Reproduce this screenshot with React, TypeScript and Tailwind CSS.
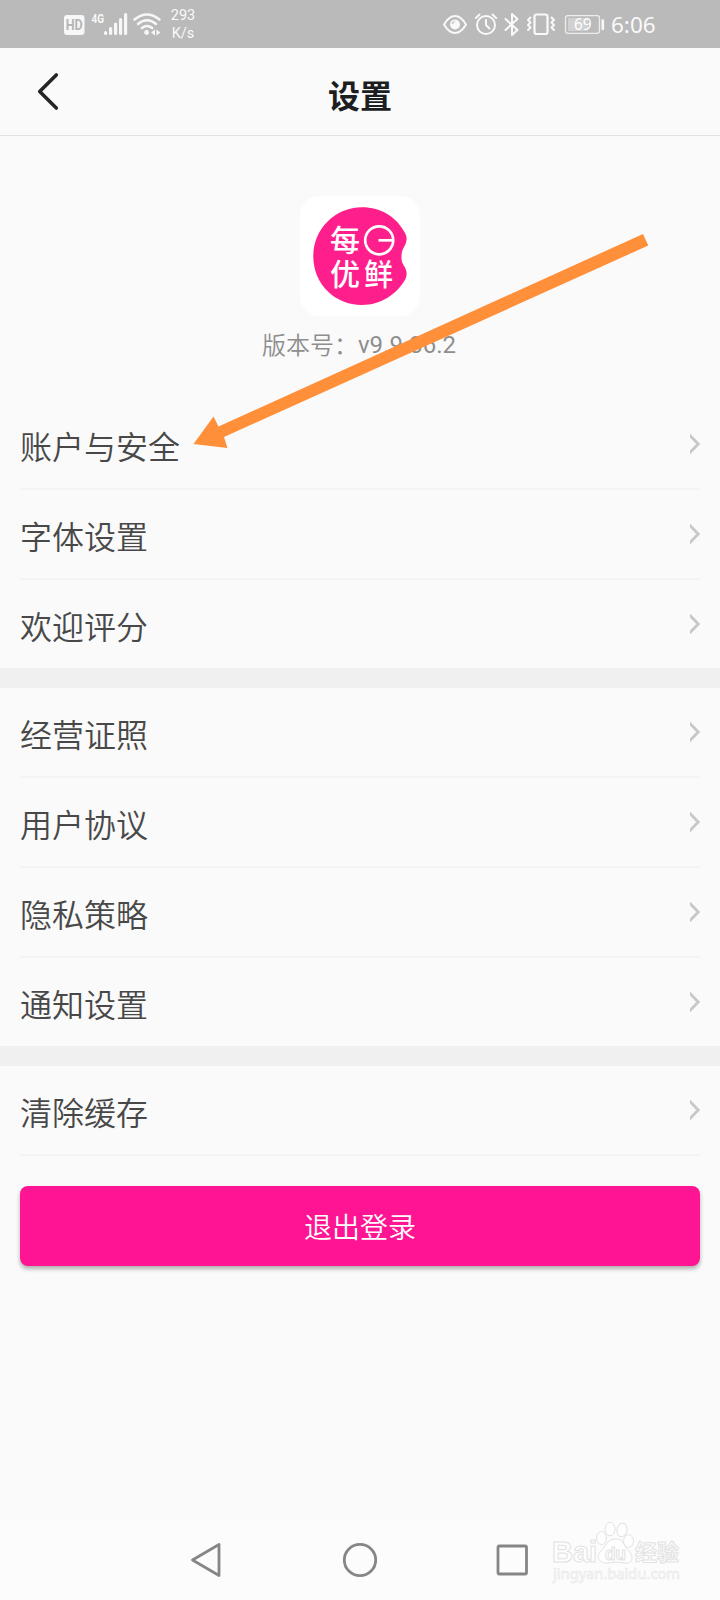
import React from "react";

const groups = [
  ["账户与安全", "字体设置", "欢迎评分"],
  ["经营证照", "用户协议", "隐私策略", "通知设置"],
  ["清除缓存"],
];

function SignalIcons() {
  return (
    <svg width="100" height="26" viewBox="62 11 100 26" fill="none">
      <rect x="64" y="15" width="20.5" height="20" rx="3" fill="#f7f7f7" />
      <text x="74.2" y="30" textAnchor="middle" fontSize="14" fontWeight="700" fill="#b5b5b5" textLength="17" lengthAdjust="spacingAndGlyphs" className="font-['Roboto']">HD</text>
      <text x="91.5" y="22.8" fontSize="13" fontWeight="700" fill="#f7f7f7" textLength="12.5" lengthAdjust="spacingAndGlyphs" className="font-['Roboto']">4G</text>
      <path d="M105.6 32.5v1M110.6 28.5v5M115.6 24v9.5M120.6 19.5v14M125.6 14.5v19" stroke="#f7f7f7" strokeWidth="3.2" strokeLinecap="round" />
      <g stroke="#f7f7f7" strokeWidth="2.4" strokeLinecap="round">
        <path d="M134.5 19.5Q147 9.5 159.5 19.5" />
        <path d="M138 24Q147 16.5 156 24" />
        <path d="M141.8 28Q147 24 152.2 28" />
      </g>
      <circle cx="146.6" cy="32.5" r="2.4" fill="#f7f7f7" />
      <path d="M155 29.5v6l-4-3zM156.5 29.5v6l4-3z" fill="#f7f7f7" />
    </svg>
  );
}

function StatusIcons() {
  return (
    <svg width="166" height="26" viewBox="441 11 166 26" fill="none" stroke="#f9f9f9" strokeWidth="2" strokeLinecap="round" strokeLinejoin="round">
      <path d="M444 24.5Q449 16 455 16T466 24.5Q461 33 455 33T444 24.5Z" />
      <circle cx="455" cy="24.5" r="5" fill="#f9f9f9" stroke="none" />
      <path d="M452.5 23.5q.5-1.5 2-2" stroke="#bababa" strokeWidth="1.2" />
      <circle cx="486" cy="25" r="9" />
      <path d="M486 20v5l3.5 3.5M475.8 18l3.7-3.5M496.2 18l-3.7-3.5" />
      <path d="M505.5 19l12 11-5.5 5V14l5.500 5-12 11" />
      <rect x="534.5" y="14.5" width="13" height="19.5" rx="2" strokeWidth="2.2" />
      <path d="M530.5 17.5l-2.5 2.5 2.5 2.5-2.5 2.5 2.5 2.5-2.5 2.5M551.5 17.5l2.5 2.5-2.5 2.5 2.5 2.5-2.5 2.5 2.5 2.5" />
      <rect x="565.5" y="15.7" width="34" height="17.6" rx="2.5" strokeWidth="1.3" stroke="#ededed" />
      <rect x="568" y="18" width="20" height="13" fill="#d0d0d0" stroke="none" />
      <path d="M602.8 20.5v8.500" strokeWidth="2.6" />
      <text x="582.8" y="30.3" textAnchor="middle" fontSize="17" fill="#fff" stroke="none" textLength="17.5" lengthAdjust="spacingAndGlyphs" className="font-['Noto_Sans']">69</text>
    </svg>
  );
}

function StatusBar() {
  return (
    <div className="flex h-12 items-center bg-[#bababa] pl-[62px] text-[#f9f9f9]">
      <SignalIcons />
      <div className="ml-2 w-[26px] pt-[2px] text-center font-['Roboto'] text-[14.5px] leading-[18px]">
        <div>293</div>
        <div>K/s</div>
      </div>
      <div className="ml-[245px] flex items-center">
        <StatusIcons />
        <span className="ml-1 pt-[2px] font-['Noto_Sans'] text-[22.5px] leading-none">6:06</span>
      </div>
    </div>
  );
}

function Header() {
  return (
    <header className="grid h-[88px] grid-cols-3 items-center border-b border-[#e2e2e2]">
      <svg className="ml-9" width="24" height="40" viewBox="36 72 24 40" fill="none" stroke="#252525" strokeWidth="3.6" strokeLinecap="round" strokeLinejoin="round">
        <path d="M56.3 75L39.7 91.5L56.3 108" />
      </svg>
      <h1 className="pt-1 text-center text-[32px] leading-none font-bold text-[#1d1e22]">设置</h1>
    </header>
  );
}

function Logo() {
  return (
    <div className="flex size-[120px] items-center justify-center rounded-[20px] bg-white">
      <svg width="120" height="120" viewBox="0 0 120 120" aria-label="每日优鲜">
        <path d="M105.5 38C97 21 81 11.3 62 11.3C35 11.3 13.3 33 13.3 60.5S35 109 62 109C81 109 97 98 105.5 83C108 77 106 73 103.5 69C100.5 64 101 57 103.5 52C106 47.5 108 43 105.5 38Z" fill="#ff1f8c" />
        <g fill="#fff" fontSize="30" fontWeight="500" className="font-['Noto_Sans_CJK_SC']">
          <text x="30" y="55">每</text>
          <text x="30" y="89">优</text>
          <text x="64" y="89" textLength="29" lengthAdjust="spacingAndGlyphs">鲜</text>
        </g>
        <circle cx="79.2" cy="44.3" r="14" fill="none" stroke="#fff" strokeWidth="2.7" />
        <path d="M78.5 44.3H93" stroke="#fff" strokeWidth="2.7" />
      </svg>
    </div>
  );
}

function Row({ label, divider }: { label: string; divider: boolean }) {
  return (
    <div className={divider ? "mx-5 border-b-2 border-[#f4f4f4]" : "mx-5"}>
      <div className="flex h-[88px] items-center justify-between">
        <span className="pt-[2px] text-[32px] leading-none font-[350] text-[#484848]">{label}</span>
        <svg width="10" height="20" viewBox="0 0 10 20" fill="none" stroke="#c8c8c8" strokeWidth="2.8">
          <path d="M-1 .5L8.2 10L-1 19.5" />
        </svg>
      </div>
    </div>
  );
}

function NavBar() {
  return (
    <nav className="flex h-20 items-center justify-center bg-[#fcfcfc]">
      <svg width="340" height="40" viewBox="190 1540 340 40" fill="none" stroke="#868686" strokeWidth="2.8" strokeLinejoin="round">
        <path d="M192.5 1560L219 1544.5V1575.5Z" />
        <circle cx="360" cy="1560" r="15.7" />
        <rect x="498" y="1546" width="28.5" height="28" rx="1.5" />
      </svg>
    </nav>
  );
}

function Watermark() {
  return (
    <svg className="absolute top-[1515px] left-[545px]" width="145" height="72" viewBox="545 1515 145 72" fill="#fefefe" stroke="#e2e2e2" strokeWidth="1">
      <g fontWeight="700" className="font-['Liberation_Sans']">
        <text x="552" y="1562" fontSize="29" textLength="45" lengthAdjust="spacingAndGlyphs">Bai</text>
        <path d="M616 1539C606 1539 606 1547 601 1551C595 1557 600 1564 607 1563Q616 1561 625 1563C633 1564 634 1556 629 1551C624 1547 624 1539 616 1539Z" />
        <ellipse cx="601.5" cy="1538" rx="5" ry="6.5" />
        <ellipse cx="610" cy="1529" rx="5" ry="6.8" />
        <ellipse cx="622" cy="1530" rx="5" ry="6.8" transform="rotate(12 622 1530)" />
        <ellipse cx="628.5" cy="1541" rx="5" ry="6.3" />
        <text x="605" y="1560" fontSize="18" textLength="21" lengthAdjust="spacingAndGlyphs">du</text>
      </g>
      <text x="635" y="1560" fontSize="22" fontWeight="700" className="font-['Noto_Sans_CJK_SC']">经验</text>
      <text x="553" y="1579" fontSize="15" stroke="#e6e6e6" strokeWidth=".6" textLength="127" lengthAdjust="spacingAndGlyphs" className="font-['Noto_Sans']">jingyan.baidu.com</text>
    </svg>
  );
}

function Arrow() {
  return (
    <svg className="pointer-events-none absolute top-[225px] left-[185px]" width="470" height="230" viewBox="185 225 470 230">
      <path d="M193.5 444L213.5 416.5L218.5 426.5L643 234L648.3 245.5L224 437L227.5 448Z" fill="#ff8f39" />
    </svg>
  );
}

function App() {
  return (
    <div className="relative flex h-[1600px] w-[720px] flex-col overflow-hidden bg-[#fafafa] font-['Noto_Sans_CJK_SC',sans-serif]">
      <StatusBar />
      <Header />
      <main className="grow">
        <section className="flex h-[264px] flex-col items-center pt-[60px]">
          <Logo />
          <p className="mt-4 mr-[2px] flex text-2xl leading-6 font-[350] text-[#8e8e8e]">
            版本号：<span className="pt-px font-['Roboto'] font-normal">v9.9.36.2</span>
          </p>
        </section>
        {groups.map((rows, g) => (
          <section key={g}>
            {g > 0 && <div className="h-5 bg-[#f0f0f0]" />}
            {rows.map((label, i) => (
              <Row key={label} label={label} divider={i < rows.length - 1 || g === groups.length - 1} />
            ))}
          </section>
        ))}
        <div className="px-5 pt-[30px]">
          <button className="h-20 w-full rounded-lg bg-[#ff1493] text-[28px] leading-none font-[350] text-white shadow-[0_3px_4px_rgba(0,0,0,0.3)]">
            退出登录
          </button>
        </div>
      </main>
      <NavBar />
      <Arrow />
      <Watermark />
    </div>
  );
}

export default App;
